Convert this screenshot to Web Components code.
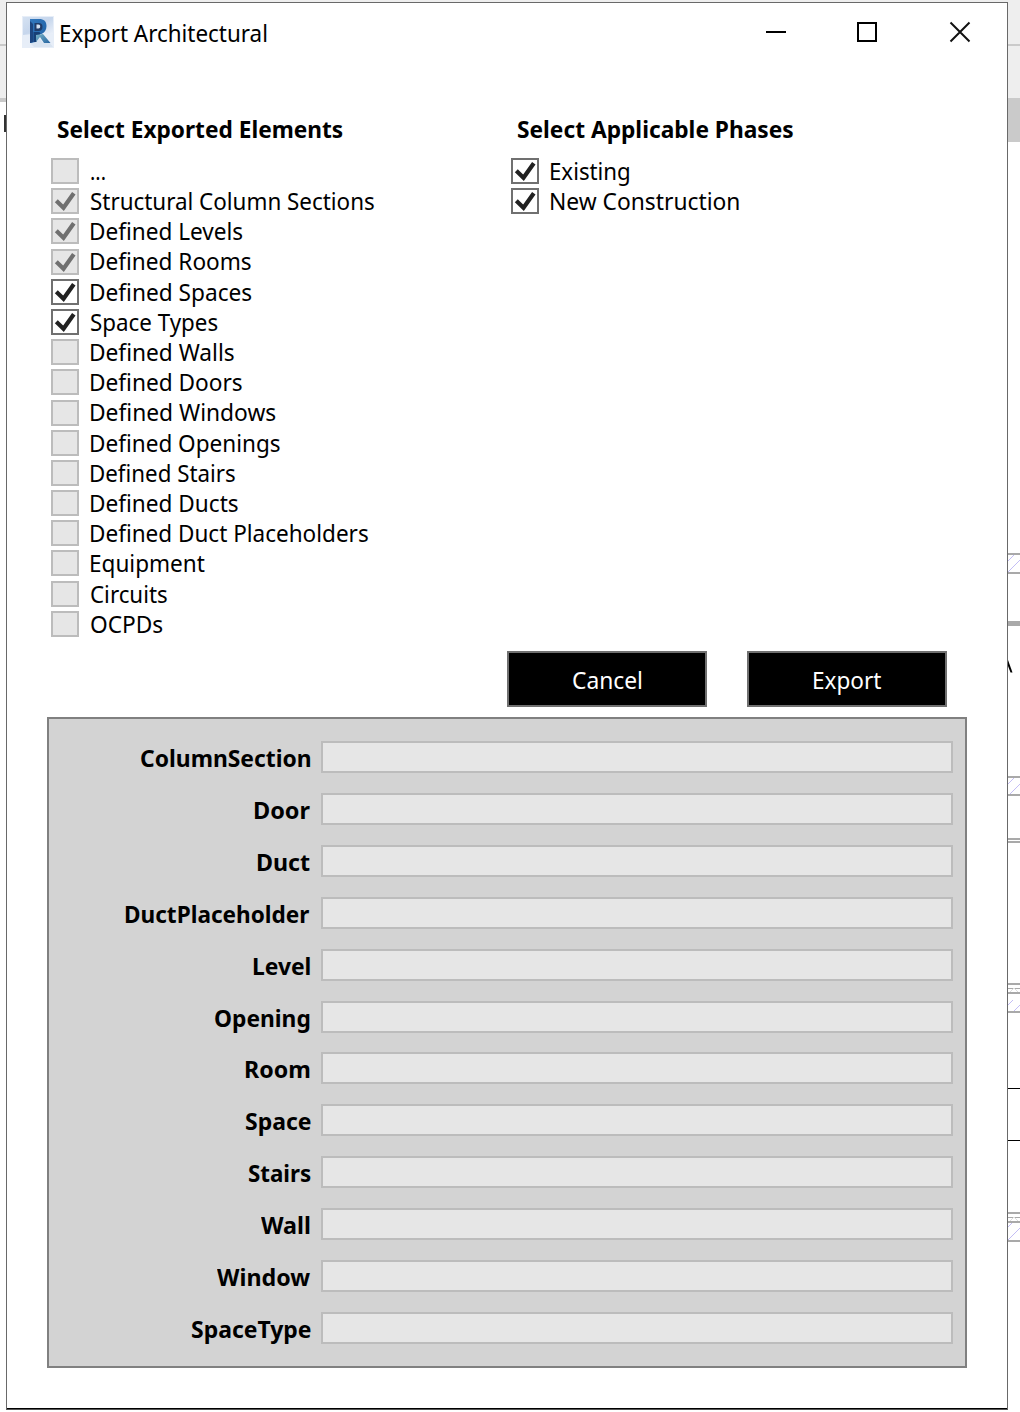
<!DOCTYPE html>
<html lang="en">
<head>
<meta charset="utf-8">
<title>Export Architectural</title>
<style>
  html, body { margin: 0; height: 1412px; overflow: hidden; background: #fff; }
  body { font: 23.5px/30px "Noto Sans", "Open Sans", sans-serif; color: #000; }
</style>
</head>
<body>
<app-desktop></app-desktop>
<script>
const define = (name, html, setup) => {
  const template = document.createElement('template');
  template.innerHTML = html;
  customElements.define(name, class extends HTMLElement {
    connectedCallback() {
      if (this.shadowRoot) return;
      const root = this.attachShadow({ mode: 'open' });
      root.append(template.content.cloneNode(true));
      if (setup) setup(this, root);
    }
  });
};

/* A single line of text whose drawn width is given by the "width" attribute. */
const pen = document.createElement('canvas').getContext('2d');
define('fit-text', `
<style>
  :host { display: block; white-space: nowrap; font-variant-ligatures: none; flex: none; }
  span { display: inline-block; transform-origin: 0 0; }
</style>
<span><slot></slot></span>`, (host, root) => {
  const style = getComputedStyle(host);
  pen.font = `${style.fontWeight} ${style.fontSize} ${style.fontFamily}`;
  const m = pen.measureText(host.textContent);
  const left = -m.actualBoundingBoxLeft;
  const width = Number(host.getAttribute('width'));
  const scale = width / (m.actualBoundingBoxRight - left);
  const span = root.querySelector('span');
  host.style.width = width + 'px';
  span.style.transform = `scaleX(${scale})`;
  span.style.marginLeft = (-left * scale) + 'px';
});

define('app-logo', `
<style>:host { display: block; width: 32px; height: 32px; } svg { display: block; }</style>
<svg width="32" height="32" viewBox="0 0 32 32">
  <defs>
    <linearGradient id="bg" x1="0" y1="0" x2="1" y2="1"><stop offset="0" stop-color="#d5e2f2"/><stop offset=".5" stop-color="#c6d6ec"/><stop offset="1" stop-color="#edf2fa"/></linearGradient>
    <linearGradient id="face" x1="0" y1="0" x2="1" y2="1"><stop offset="0" stop-color="#3479bd"/><stop offset="1" stop-color="#1d5fa5"/></linearGradient>
    <linearGradient id="leg" x1="0" y1="0" x2="1" y2="1"><stop offset="0" stop-color="#79b2c6"/><stop offset="1" stop-color="#2464a1"/></linearGradient>
  </defs>
  <path d="M0 0h32v32H0z" fill="#e7eef8"/>
  <path d="M1 1h30v17L20 17 1 19z" fill="url(#bg)"/>
  <path d="M8 27h4l5-5 4 5h7l3 4H12z" fill="#d9e4f1"/>
  <path d="M8 3h9c5 0 7.500 2.500 7.500 7 0 4-2 6.500-5 8l-6 1v7L9 27H8z" fill="url(#face)"/>
  <path d="M8 5l3 3v18l-3 1z" fill="#1d4680"/>
  <path d="M12.500 7h4c3 0 4 1.500 4 4s-1.500 4-4 4h-4z" fill="#203c69"/>
  <path d="M14.500 8.500h2c1.200 0 1.700.700 1.700 2s-.600 2-1.700 2h-2z" fill="#d3e1f2"/>
  <path d="M11.500 16h6l1 2-4 4v4h-3z" fill="#163f76"/>
  <path d="M14 19l7-1 7.500 9h-6.500l-4-6-4 5z" fill="url(#leg)"/>
</svg>`);

define('title-bar', `
<style>
  :host { display: flex; justify-content: space-between; height: 58px; }
  .name { display: flex; gap: 6.700px; padding: 13px 0 0 15px; }
  fit-text { margin-top: 2px; }
  .controls { display: flex; gap: 70px; padding: 18px 36px 0 0; }
  svg { display: block; width: 22px; height: 22px; fill: none; stroke: #000; stroke-width: 2; }
</style>
<div class="name"><app-logo></app-logo><fit-text width="206">Export Architectural</fit-text></div>
<div class="controls">
  <svg viewBox="0 0 22 22"><path d="M1 11h20"/></svg>
  <svg viewBox="0 0 22 22" style="margin:0 1px 0 -1px"><path d="M2 2h18v18H2z"/></svg>
  <svg viewBox="0 0 22 22"><path d="M1.500 1.500l19 19M20.500 1.500l-19 19" stroke="#111"/></svg>
</div>`);

define('check-row', `
<style>
  :host { display: flex; height: 30.200px; }
  i { box-sizing: border-box; width: 28px; height: 26px; margin: 2px 11.700px 0 0; border: 2px solid #707070; background: #fff; color: #212121; }
  ::slotted(fit-text) { margin-top: -0.100px; }
  :host([disabled]) i { border-color: #bcbcbc; background: #e6e6e6; color: #707070; }
  svg { display: none; width: 24px; height: 22px; }
  :host([checked]) svg { display: block; }
</style>
<i><svg viewBox="0 0 24 22"><path d="M3.300 10.800l7.200 7L20.800 3.200" fill="none" stroke="currentColor" stroke-width="4.200"/></svg></i><slot></slot>`);

define('check-group', `
<style>
  :host { display: block; }
  fit-text { font-weight: 700; margin: 0 0 12px 6.700px; }
</style>
<fit-text></fit-text><slot></slot>`, (host, root) => {
  const title = document.createElement('fit-text');
  title.setAttribute('width', host.getAttribute('title-width'));
  title.textContent = host.getAttribute('heading');
  root.querySelector('fit-text').replaceWith(title);
});

define('push-button', `
<style>
  :host { display: flex; box-sizing: border-box; width: 200px; height: 56px; padding-top: 12px; justify-content: center; background: #000; color: #fff; border: 2px solid #707070; }
</style><slot></slot>`);

define('field-row', `
<style>
  :host { display: flex; justify-content: flex-end; gap: 10.700px; height: 51.920px; font-weight: 700; }
  .box { box-sizing: border-box; width: 632px; height: 32px; background: #e6e6e6; border: 2px solid #bcbcbc; }
  ::slotted(fit-text) { margin-top: 2px; }
</style><slot></slot><div class="box"></div>`);

define('field-panel', `
<style>
  :host { display: block; box-sizing: border-box; height: 651px; margin: 10px 40px 0; padding: 22px 12px 0; background: #d3d3d3; border: 2px solid #808080; }
</style><slot></slot>`);

const elements = [
  ['...', 14, 'disabled'], ['Structural Column Sections', 283.5, 'disabled checked'],
  ['Defined Levels', 152, 'disabled checked'], ['Defined Rooms', 160.5, 'disabled checked'],
  ['Defined Spaces', 161, 'checked'], ['Space Types', 127, 'checked'],
  ['Defined Walls', 143.5, 'disabled'], ['Defined Doors', 151.5, 'disabled'],
  ['Defined Windows', 185, 'disabled'], ['Defined Openings', 189.5, 'disabled'],
  ['Defined Stairs', 144.5, 'disabled'], ['Defined Ducts', 147.5, 'disabled'],
  ['Defined Duct Placeholders', 277.5, 'disabled'], ['Equipment', 113.5, 'disabled'],
  ['Circuits', 76.5, 'disabled'], ['OCPDs', 72, 'disabled']];
const phases = [['Existing', 78.5, 'checked'], ['New Construction', 188, 'checked']];
const fields = [['ColumnSection', 169.5], ['Door', 55.5], ['Duct', 52], ['DuctPlaceholder', 184], ['Level', 56.5],
  ['Opening', 95], ['Room', 64], ['Space', 64.5], ['Stairs', 61.5], ['Wall', 49], ['Window', 93], ['SpaceType', 118.5]];
const fit = (text, width) => `<fit-text width="${width}">${text}</fit-text>`;
const checks = list => list.map(([t, w, a]) => `<check-row ${a}>${fit(t, w)}</check-row>`).join('');

define('export-dialog', `
<style>
  :host { display: block; box-sizing: border-box; width: 1002px; height: 1408px; margin-top: 2px; background: #fff; border: 1px solid #696969; border-bottom-color: #555; box-shadow: inset 0 -1px #000; }
  .choices { display: grid; grid-template-columns: 460px auto; height: 534px; padding: 53px 0 0 44px; }
  .actions { display: flex; gap: 40px; justify-content: flex-end; padding-right: 60px; margin-top: 3px; }
</style>
<title-bar></title-bar>
<div class="choices">
  <check-group heading="Select Exported Elements" title-width="284.500">${checks(elements)}</check-group>
  <check-group heading="Select Applicable Phases" title-width="275">${checks(phases)}</check-group>
</div>
<div class="actions"><push-button>${fit('Cancel', 69)}</push-button><push-button>${fit('Export', 67)}</push-button></div>
<field-panel>${fields.map(([t, w]) => `<field-row>${fit(t, w)}</field-row>`).join('')}</field-panel>`);

/* Slivers of the drawing application on both sides of the dialog. */
define('app-desktop', `
<style>
  :host { display: grid; grid-template-columns: 6px 1002px 12px; height: 1412px; background: linear-gradient(#eee 98px, #fff 98px); }
  svg { display: block; }
</style>
<svg width="6" height="1412"><path d="M0 44h6v2H0zM0 98h6v4H0z" fill="#c9c9c9"/><path d="M4 115h2v17H4z" fill="#333"/></svg>
<export-dialog></export-dialog>
<svg width="12" height="1412">
  <path d="M0 44h12v2H0zM0 98h12v44H0z" fill="#cacaca"/>
  <path d="M0 553h12v2H0zM0 572h12v2H0zM0 621h12v5H0zM0 776h12v2H0zM0 794h12v2H0zM0 838h12v2H0zM0 841h12v2H0zM0 983h12v2H0zM0 988h12v1H0zM0 992h12v2H0zM0 1011h12v2H0zM0 1212h12v2H0zM0 1217h12v1H0zM0 1221h12v2H0zM0 1240h12v2H0z" fill="#a9a9a9"/>
  <path d="M0 561l6-6M0 572l12-12M0 784l6-6M2 794l10-10M0 1005l5-5M6 1011l6-6M0 1227l4-4M0 1240l12-12" fill="none" stroke="#c3bdf5"/>
  <path d="M2 992l4-4 4 4M2 1221l4-4 4 4" fill="none" stroke="#ddd"/>
  <path d="M0 1088h12v1H0zM0 1140h12v1H0z"/>
  <path d="M0 660v6l2.500 6.500h2z"/>
</svg>`);
</script>
</body>
</html>
